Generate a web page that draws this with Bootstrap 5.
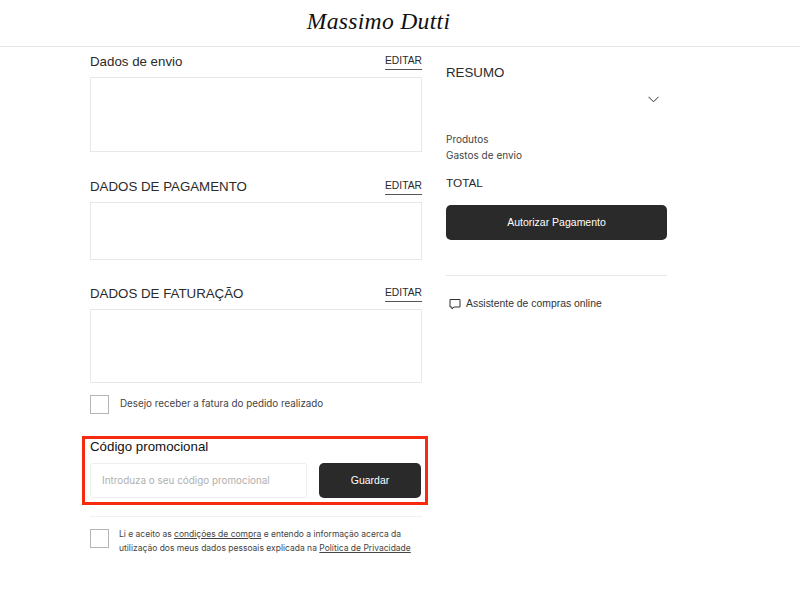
<!DOCTYPE html>
<html lang="en">
<head>
  <meta charset="UTF-8" />
  <meta name="viewport" content="width=device-width, initial-scale=1" />
  <title>Massimo Dutti</title>
  <link href="https://cdn.jsdelivr.net/npm/bootstrap@5.3.3/dist/css/bootstrap.min.css" rel="stylesheet">
  <style>
    body { font-family: "Liberation Sans", sans-serif; background: #fff; color: #2a2a2a; overflow: hidden; }
    .top-bar { height: 47px; border-bottom: 1px solid #e8e8e8; }
    .brand-logo { font-family: "Liberation Serif", serif; font-style: italic; font-size: 23.6px; line-height: 24px; color: #111; margin-left: -43px; margin-top: -4px; letter-spacing: .3px; }
    .checkout { padding-left: 90px; }
    .left-col { width: 332px; }
    .right-col { width: 221px; margin-left: 24px; padding-top: 18px; }
    .sec-head { height: 30px; }
    .sec-title { font-size: 13.3px; line-height: 16px; margin: 0; font-weight: 400; }
    .edit-link { font-size: 10.3px; line-height: 12px; color: #2a2a2a; text-decoration: none; border-bottom: 1px solid #555; padding-bottom: 2px; margin-top: 1px; }
    .info-box { border: 1px solid #e8e8e8; }
    .box-a { height: 75px; margin-bottom: 20px; }
    .box-b { height: 58px; margin-bottom: 19px; }
    .box-c { height: 74px; margin-bottom: 12px; }
    .sq-check { width: 19px; height: 19px; border: 1px solid #b5b5b5; flex: none; }
    .small-txt { font-family: "Inter", sans-serif; font-size: 9.8px; color: #444; }
    .consent-label { margin-left: 3px; }
    .promo-wrap { margin: 22px -6px 0 -8px; height: 69px; border: 3px solid #f7290f; padding: 0 4px 0 5px; }
    .promo-title { font-size: 13.3px; line-height: 16px; color: #111; margin-bottom: 8px; }
    .promo-input { width: 217px; height: 35px; border: 1px solid #efefef; border-radius: 2px; font-family: "Inter", sans-serif; font-size: 9.9px; color: #b0b0b0; padding: 0 11px; }
    .promo-btn { width: 102px; height: 35px; margin-left: 12px; }
    .dark-btn { background: #2a2a2a; color: #fff; border: 0; border-radius: 5px; font-size: 10.5px; padding: 0; }
    .dark-btn:hover { background: #2a2a2a; color: #fff; }
    .legal { margin-top: 11px; border-top: 1px solid #f0f0f0; padding-top: 12px; }
    .legal p { font-size: 8.5px; line-height: 14px; margin: -2px 0 0 10px; white-space: nowrap; }
    .legal a { color: #444; }
    .sum-title { font-size: 13.3px; line-height: 16px; margin: 0; font-weight: 400; }
    .total-title { font-size: 11.8px; }
    .chev { margin: 15px 8px 0 0; display: block; }
    .sum-lines { font-family: "Inter", sans-serif; font-size: 10px; line-height: 15.5px; color: #444; margin-top: 29px; }
    .auth-btn { height: 35px; margin-top: 14px; }
    .sum-rule { margin: 35px 0 0; border: 0; border-top: 1px solid #e8e8e8; opacity: 1; }
    .help-row { margin-top: 21px; font-size: 10.4px; line-height: 14px; color: #333; gap: 5px; }
    .help-icon { margin-left: 3px; }
  </style>
</head>
<body>
  <header class="top-bar d-flex align-items-center justify-content-center">
    <div class="brand-logo">Massimo Dutti</div>
  </header>

  <main class="checkout d-flex">
    <div class="left-col">
      <div class="sec-head d-flex justify-content-between align-items-center">
        <h2 class="sec-title">Dados de envio</h2>
        <a href="#" class="edit-link">EDITAR</a>
      </div>
      <div class="info-box box-a"></div>

      <div class="sec-head d-flex justify-content-between align-items-center">
        <h2 class="sec-title">DADOS DE PAGAMENTO</h2>
        <a href="#" class="edit-link">EDITAR</a>
      </div>
      <div class="info-box box-b"></div>

      <div class="sec-head d-flex justify-content-between align-items-center">
        <h2 class="sec-title">DADOS DE FATURAÇÃO</h2>
        <a href="#" class="edit-link">EDITAR</a>
      </div>
      <div class="info-box box-c"></div>

      <div class="d-flex align-items-center gap-2">
        <span class="sq-check"></span>
        <span class="small-txt consent-label">Desejo receber a fatura do pedido realizado</span>
      </div>

      <div class="promo-wrap">
        <div class="promo-title">Código promocional</div>
        <div class="d-flex">
          <div class="promo-input d-flex align-items-center">Introduza o seu código promocional</div>
          <button class="btn dark-btn promo-btn">Guardar</button>
        </div>
      </div>

      <div class="legal d-flex align-items-start">
        <span class="sq-check"></span>
        <p class="small-txt">Li e aceito as <a href="#">condições de compra</a> e entendo a informação acerca da<br>utilização dos meus dados pessoais explicada na <a href="#">Política de Privacidade</a></p>
      </div>
    </div>

    <aside class="right-col">
      <h2 class="sum-title">RESUMO</h2>
      <div class="d-flex justify-content-end">
        <svg class="chev" width="11" height="7" viewBox="0 0 11 7" fill="none" stroke="#333" stroke-width="1"><path d="M.5.8l5 5 5-5"/></svg>
      </div>
      <div class="sum-lines">Produtos<br>Gastos de envio</div>
      <div class="sum-title total-title mt-2 pt-1">TOTAL</div>
      <button class="btn dark-btn auth-btn w-100">Autorizar Pagamento</button>
      <hr class="sum-rule">
      <div class="help-row d-flex align-items-center">
        <svg class="help-icon" width="12" height="12" viewBox="0 0 12 12" fill="none" stroke="#333" stroke-width="1"><path d="M1 1.5h10v7.5H5L3 11V9H1z"/></svg>
        <span>Assistente de compras online</span>
      </div>
    </aside>
  </main>
  <script src="https://cdn.jsdelivr.net/npm/bootstrap@5.3.3/dist/js/bootstrap.bundle.min.js"></script>
</body>
</html>
